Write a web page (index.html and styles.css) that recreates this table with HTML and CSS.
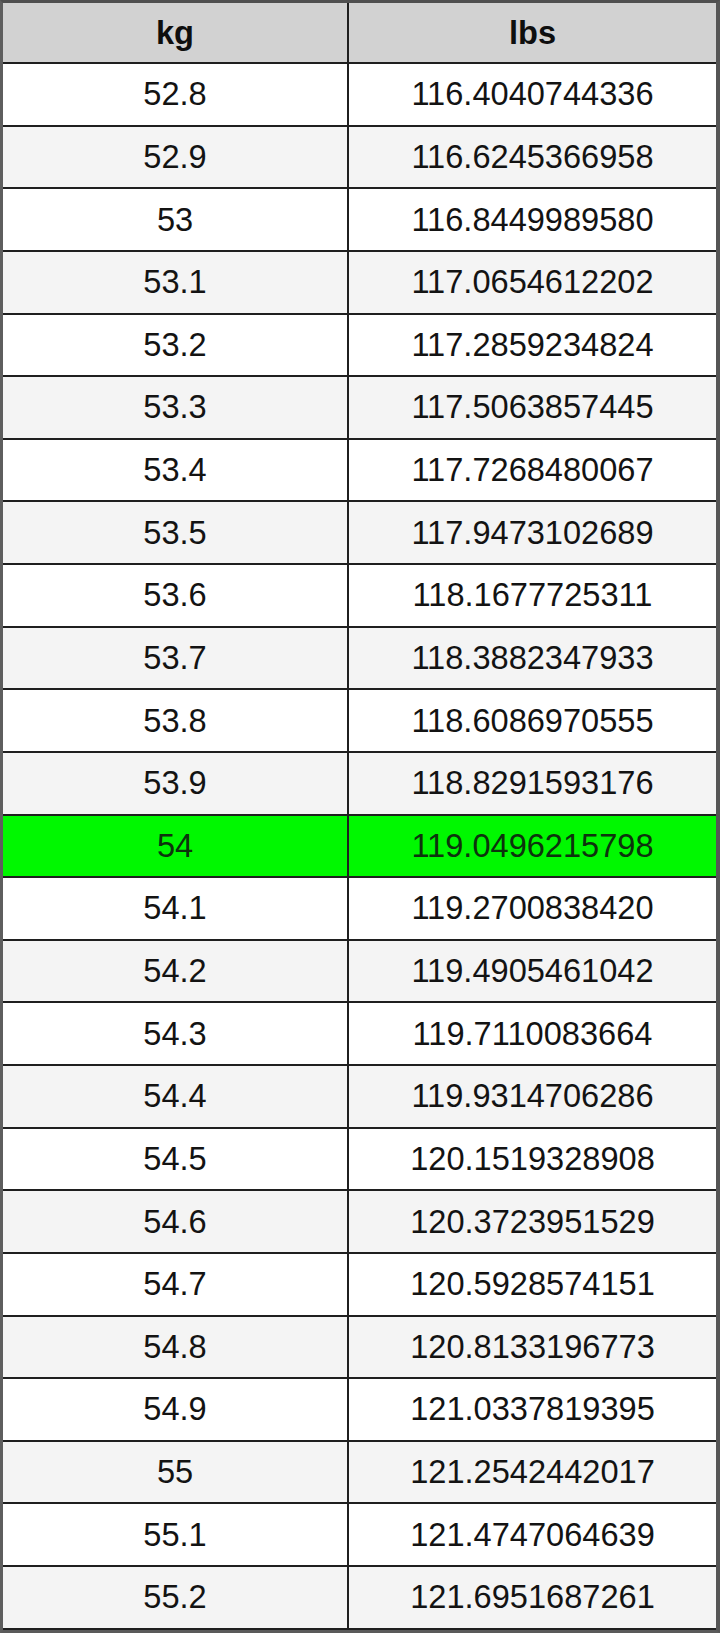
FILE: index.html
```html
<!DOCTYPE html>
<html lang="en">
<head>
<meta charset="utf-8">
<title>kg to lbs</title>
<link rel="stylesheet" href="styles.css">
</head>
<body>
<div class="table">
  <div class="row head"><div class="cell">kg</div><div class="cell">lbs</div></div>
  <div class="row"><div class="cell">52.8</div><div class="cell">116.4040744336</div></div>
  <div class="row alt"><div class="cell">52.9</div><div class="cell">116.6245366958</div></div>
  <div class="row"><div class="cell">53</div><div class="cell">116.8449989580</div></div>
  <div class="row alt"><div class="cell">53.1</div><div class="cell">117.0654612202</div></div>
  <div class="row"><div class="cell">53.2</div><div class="cell">117.2859234824</div></div>
  <div class="row alt"><div class="cell">53.3</div><div class="cell">117.5063857445</div></div>
  <div class="row"><div class="cell">53.4</div><div class="cell">117.7268480067</div></div>
  <div class="row alt"><div class="cell">53.5</div><div class="cell">117.9473102689</div></div>
  <div class="row"><div class="cell">53.6</div><div class="cell">118.1677725311</div></div>
  <div class="row alt"><div class="cell">53.7</div><div class="cell">118.3882347933</div></div>
  <div class="row"><div class="cell">53.8</div><div class="cell">118.6086970555</div></div>
  <div class="row alt"><div class="cell">53.9</div><div class="cell">118.8291593176</div></div>
  <div class="row hl"><div class="cell">54</div><div class="cell">119.0496215798</div></div>
  <div class="row"><div class="cell">54.1</div><div class="cell">119.2700838420</div></div>
  <div class="row alt"><div class="cell">54.2</div><div class="cell">119.4905461042</div></div>
  <div class="row"><div class="cell">54.3</div><div class="cell">119.7110083664</div></div>
  <div class="row alt"><div class="cell">54.4</div><div class="cell">119.9314706286</div></div>
  <div class="row"><div class="cell">54.5</div><div class="cell">120.1519328908</div></div>
  <div class="row alt"><div class="cell">54.6</div><div class="cell">120.3723951529</div></div>
  <div class="row"><div class="cell">54.7</div><div class="cell">120.5928574151</div></div>
  <div class="row alt"><div class="cell">54.8</div><div class="cell">120.8133196773</div></div>
  <div class="row"><div class="cell">54.9</div><div class="cell">121.0337819395</div></div>
  <div class="row alt"><div class="cell">55</div><div class="cell">121.2542442017</div></div>
  <div class="row"><div class="cell">55.1</div><div class="cell">121.4747064639</div></div>
  <div class="row alt"><div class="cell">55.2</div><div class="cell">121.6951687261</div></div>
</div>
</body>
</html>
```
FILE: styles.css
```css
html, body {
  margin: 0;
  padding: 0;
  background: #ffffff;
}
.table {
  width: 720px;
  box-sizing: border-box;
  border-top: 3px solid #4f4f4f;
  border-left: 3px solid #5e5e5e;
  border-right: 4px solid #555555;
  border-bottom: 3px solid #5a5a5a;
  font-family: "Liberation Sans", Arial, sans-serif;
  font-size: 32.6px;
  color: #131313;
}
.row {
  display: grid;
  grid-template-columns: 346px 1fr;
  height: 62.64px;
  box-sizing: border-box;
  border-bottom: 2px solid #1f1f1f;
  background: #ffffff;
}
.row.head {
  height: 61px;
  background: #d2d2d2;
  font-weight: bold;
  color: #0e0e0e;
}
.row.alt {
  background: #f4f4f4;
}
.row.hl {
  background: #00f800;
  color: #0d330d;
}
.cell {
  display: flex;
  align-items: center;
  justify-content: center;
}
.cell:first-child {
  border-right: 2px solid #1f1f1f;
}
```
